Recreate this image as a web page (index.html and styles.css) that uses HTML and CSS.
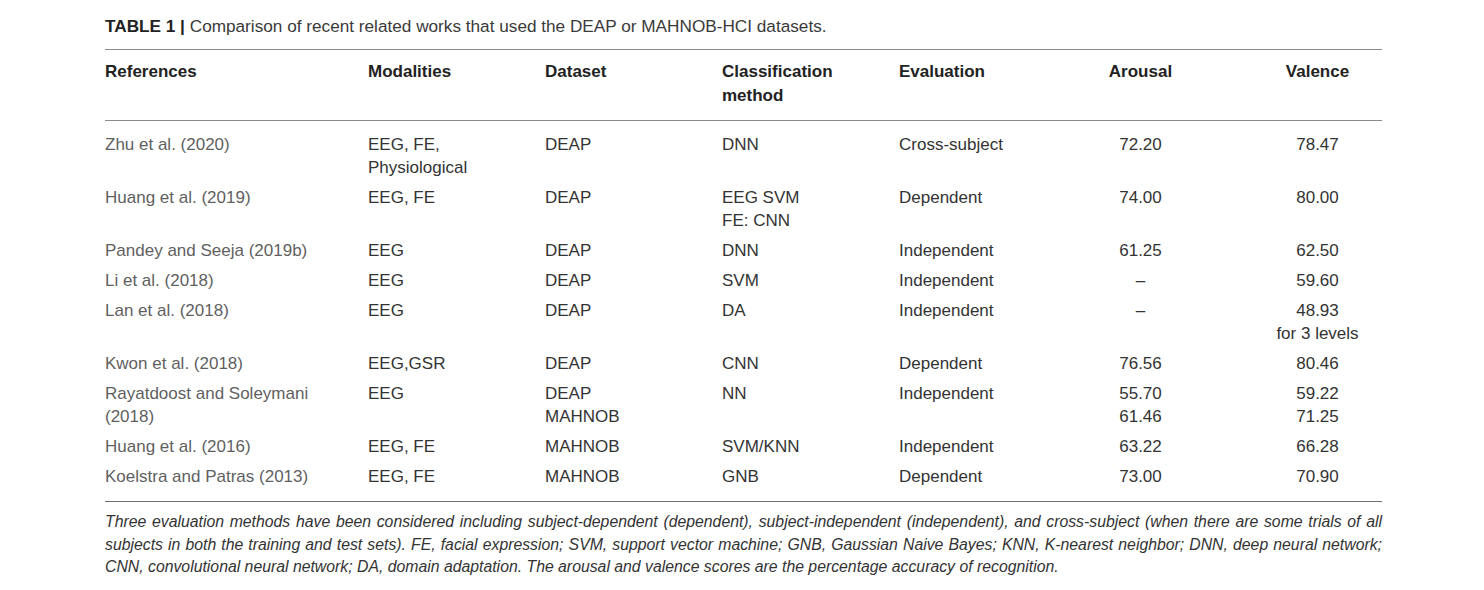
FILE: index.html
```html
<!DOCTYPE html>
<html>
<head>
<meta charset="utf-8">
<link rel="stylesheet" href="styles.css">
</head>
<body>
<div class="page">
  <div class="title"><b>TABLE 1 |</b> Comparison of recent related works that used the DEAP or MAHNOB-HCI datasets.</div>
  <div class="table">
    <div class="row head">
      <div class="c">References</div>
      <div class="c">Modalities</div>
      <div class="c">Dataset</div>
      <div class="c">Classification<br>method</div>
      <div class="c">Evaluation</div>
      <div class="c ar">Arousal</div>
      <div class="c va">Valence</div>
    </div>
    <div class="body">
      <div class="row">
        <div class="c ref">Zhu et al. (2020)</div>
        <div class="c">EEG, FE,<br>Physiological</div>
        <div class="c">DEAP</div>
        <div class="c">DNN</div>
        <div class="c">Cross-subject</div>
        <div class="c ar">72.20</div>
        <div class="c va">78.47</div>
      </div>
      <div class="row">
        <div class="c ref">Huang et al. (2019)</div>
        <div class="c">EEG, FE</div>
        <div class="c">DEAP</div>
        <div class="c">EEG SVM<br>FE: CNN</div>
        <div class="c">Dependent</div>
        <div class="c ar">74.00</div>
        <div class="c va">80.00</div>
      </div>
      <div class="row">
        <div class="c ref">Pandey and Seeja (2019b)</div>
        <div class="c">EEG</div>
        <div class="c">DEAP</div>
        <div class="c">DNN</div>
        <div class="c">Independent</div>
        <div class="c ar">61.25</div>
        <div class="c va">62.50</div>
      </div>
      <div class="row">
        <div class="c ref">Li et al. (2018)</div>
        <div class="c">EEG</div>
        <div class="c">DEAP</div>
        <div class="c">SVM</div>
        <div class="c">Independent</div>
        <div class="c ar">–</div>
        <div class="c va">59.60</div>
      </div>
      <div class="row">
        <div class="c ref">Lan et al. (2018)</div>
        <div class="c">EEG</div>
        <div class="c">DEAP</div>
        <div class="c">DA</div>
        <div class="c">Independent</div>
        <div class="c ar">–</div>
        <div class="c va">48.93<br>for 3 levels</div>
      </div>
      <div class="row">
        <div class="c ref">Kwon et al. (2018)</div>
        <div class="c">EEG,GSR</div>
        <div class="c">DEAP</div>
        <div class="c">CNN</div>
        <div class="c">Dependent</div>
        <div class="c ar">76.56</div>
        <div class="c va">80.46</div>
      </div>
      <div class="row">
        <div class="c ref">Rayatdoost and Soleymani<br>(2018)</div>
        <div class="c">EEG</div>
        <div class="c">DEAP<br>MAHNOB</div>
        <div class="c">NN</div>
        <div class="c">Independent</div>
        <div class="c ar">55.70<br>61.46</div>
        <div class="c va">59.22<br>71.25</div>
      </div>
      <div class="row">
        <div class="c ref">Huang et al. (2016)</div>
        <div class="c">EEG, FE</div>
        <div class="c">MAHNOB</div>
        <div class="c">SVM/KNN</div>
        <div class="c">Independent</div>
        <div class="c ar">63.22</div>
        <div class="c va">66.28</div>
      </div>
      <div class="row">
        <div class="c ref">Koelstra and Patras (2013)</div>
        <div class="c">EEG, FE</div>
        <div class="c">MAHNOB</div>
        <div class="c">GNB</div>
        <div class="c">Dependent</div>
        <div class="c ar">73.00</div>
        <div class="c va">70.90</div>
      </div>
    </div>
  </div>
  <p class="note">Three evaluation methods have been considered including subject-dependent (dependent), subject-independent (independent), and cross-subject (when there are some trials of all subjects in both the training and test sets). FE, facial expression; SVM, support vector machine; GNB, Gaussian Naive Bayes; KNN, K-nearest neighbor; DNN, deep neural network; CNN, convolutional neural network; DA, domain adaptation. The arousal and valence scores are the percentage accuracy of recognition.</p>
</div>
</body>
</html>
```
FILE: styles.css
```css
html, body {
  margin: 0;
  padding: 0;
  background: #ffffff;
}
body {
  font-family: "Liberation Sans", Arial, sans-serif;
  color: #333333;
}
.page {
  width: 1277px;
  margin-left: 105px;
  padding-top: 14px;
}
.title {
  font-size: 17.2px;
  line-height: 24px;
  color: #3a3a3a;
  height: 35px;
}
.title b {
  color: #222;
}
.table {
  border-top: 1px solid #8a8a8a;
  border-bottom: 1px solid #6e6e6e;
}
.row {
  display: grid;
  grid-template-columns: 263px 177px 177px 177px 177px 177px 129px;
  font-size: 17px;
  line-height: 23px;
}
.row.head {
  font-weight: bold;
  color: #222;
  line-height: 24px;
  padding-top: 10px;
  padding-bottom: 12px;
  border-bottom: 1px solid #8a8a8a;
}
.body {
  padding-top: 12px;
  padding-bottom: 13px;
}
.body .row {
  padding-bottom: 7px;
}
.body .row:last-child {
  padding-bottom: 0;
}
.c.ref {
  color: #5f5f5f;
}
.c.ar {
  text-align: center;
  padding-right: 48px;
}
.c.va {
  text-align: center;
}
.note {
  margin: 9px 0 0 0;
  font-style: italic;
  font-size: 15.8px;
  line-height: 22.5px;
  color: #333;
  text-align: justify;
}
```
